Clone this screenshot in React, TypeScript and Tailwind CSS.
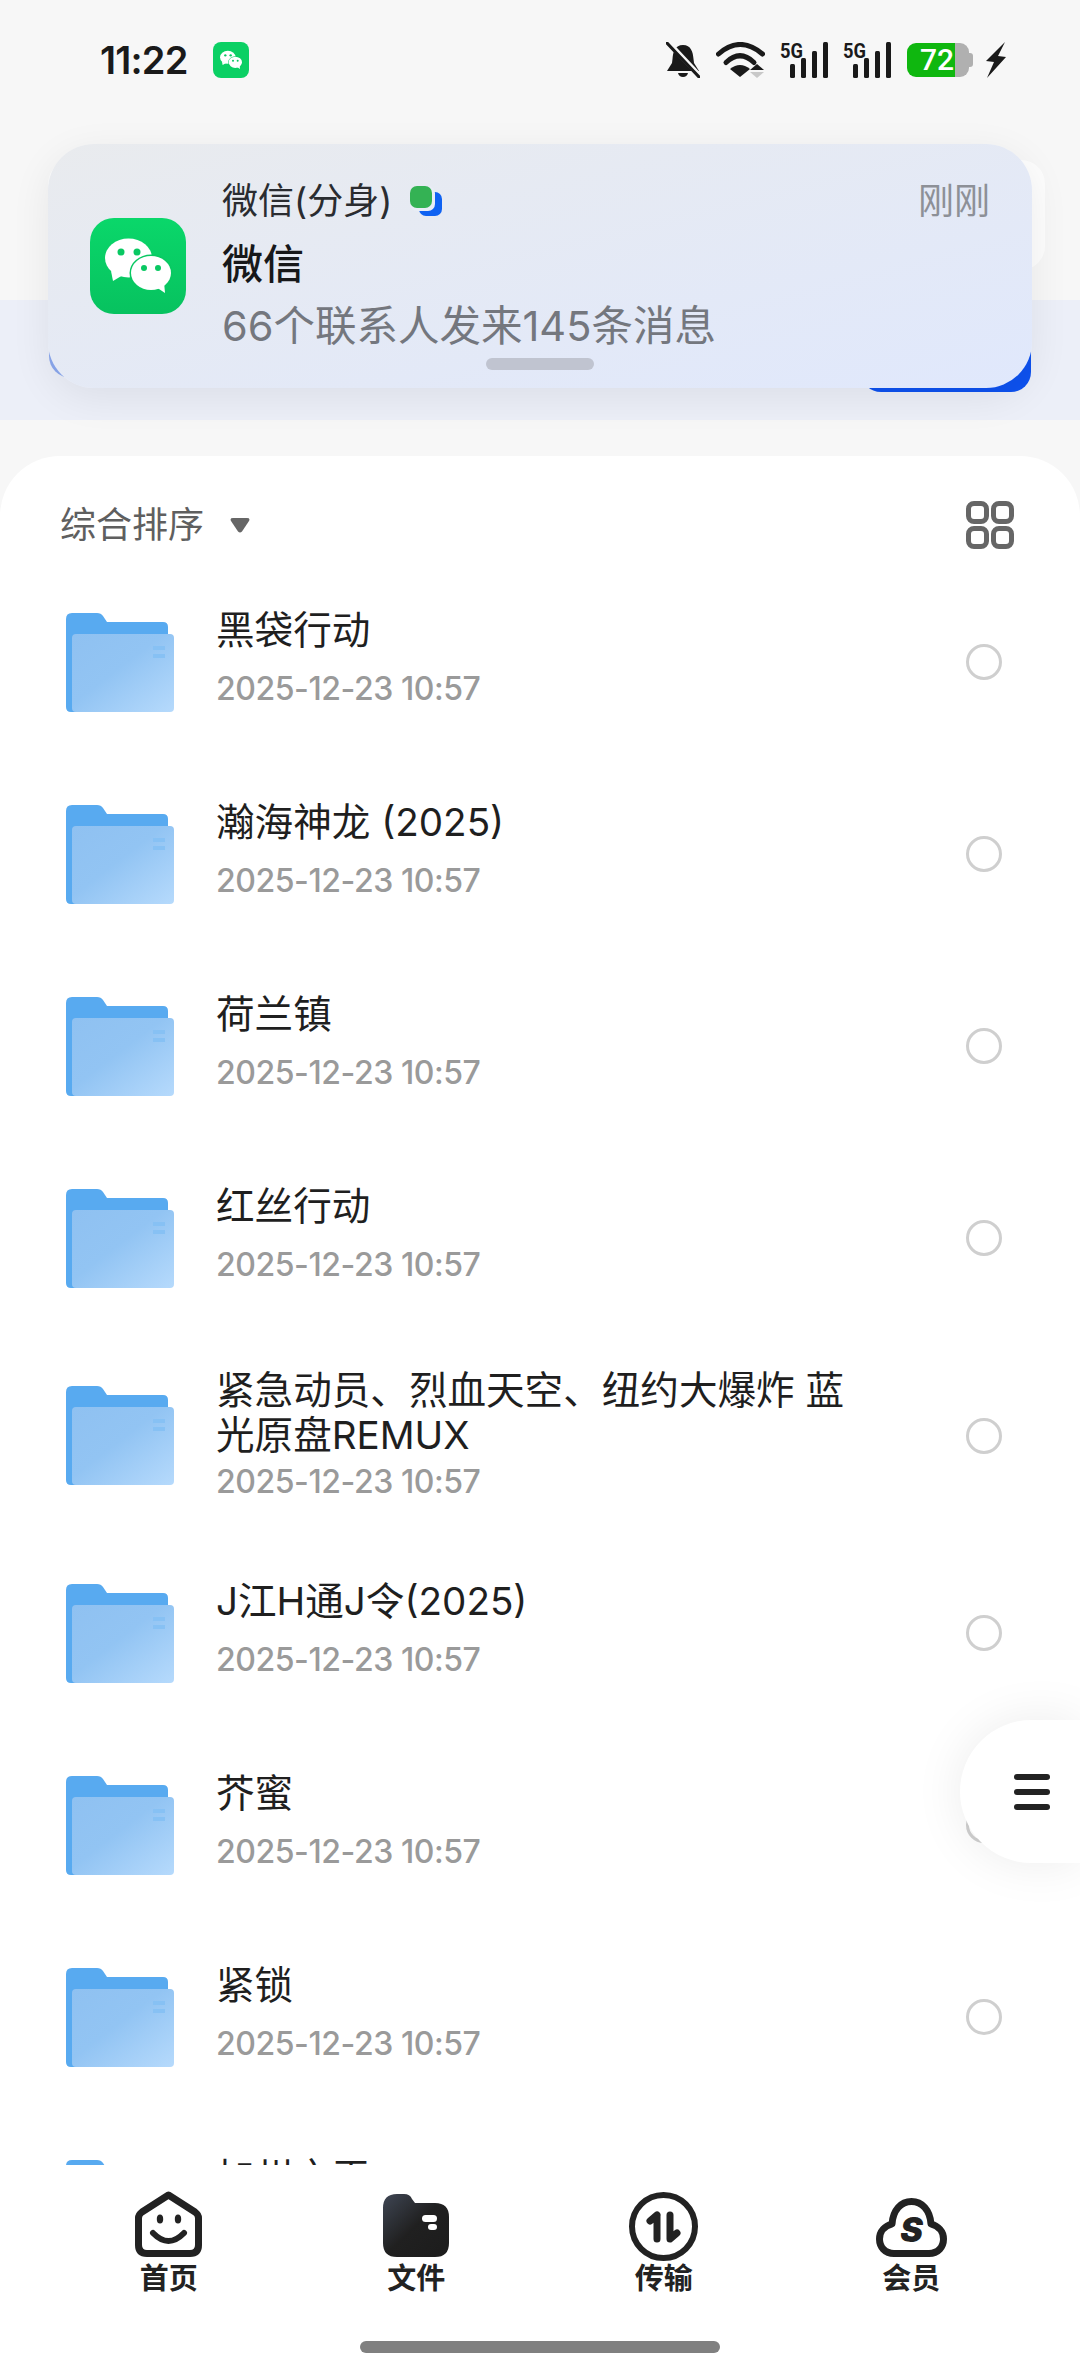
import * as React from "react";

type FileRow = {
  name: string;
  time: string;
  tall?: boolean;
};

const files: FileRow[] = [
  { name: "黑袋行动", time: "2025-12-23 10:57" },
  { name: "瀚海神龙 (2025)", time: "2025-12-23 10:57" },
  { name: "荷兰镇", time: "2025-12-23 10:57" },
  { name: "红丝行动", time: "2025-12-23 10:57" },
  { name: "紧急动员、烈血天空、纽约大爆炸 蓝光原盘REMUX", time: "2025-12-23 10:57", tall: true },
  { name: "J江H通J令(2025)", time: "2025-12-23 10:57" },
  { name: "芥蜜", time: "2025-12-23 10:57" },
  { name: "紧锁", time: "2025-12-23 10:57" },
  { name: "加州之王", time: "2025-12-23 10:57" },
];

function WeChatMark({ className }: { className: string }) {
  return (
    <svg viewBox="0 0 96 96" className={className}>
      <ellipse cx="38.5" cy="40" rx="23.5" ry="19.5" fill="#fff" />
      <path d="M21 53 L23 63 L33 57 Z" fill="#fff" />
      <circle cx="31" cy="34" r="3.5" fill="#09c862" />
      <circle cx="47" cy="34" r="3.5" fill="#09c862" />
      <ellipse cx="61" cy="55" rx="21.5" ry="18.5" fill="#09c862" />
      <ellipse cx="61" cy="55" rx="20" ry="17" fill="#fff" />
      <path d="M66 69 L75 75 L74 64 Z" fill="#fff" />
      <circle cx="54" cy="50" r="3" fill="#09c862" />
      <circle cx="68" cy="50" r="3" fill="#09c862" />
    </svg>
  );
}

function SignalIcon() {
  return (
    <svg viewBox="0 0 49 36" className="h-[36px] w-[49px] overflow-visible">
      <text
        x="0"
        y="16"
        fontSize="21"
        fontWeight="700"
        fontFamily="Roboto, sans-serif"
        fill="#1a1a1a"
        textLength="23"
        lengthAdjust="spacingAndGlyphs"
      >
        5G
      </text>
      <rect x="10" y="22" width="5" height="14" rx="1.5" fill="#1a1a1a" />
      <rect x="21" y="16" width="5" height="20" rx="1.5" fill="#1a1a1a" />
      <rect x="32" y="9" width="5" height="27" rx="1.5" fill="#1a1a1a" />
      <rect x="43" y="0" width="5" height="36" rx="1.5" fill="#1a1a1a" />
    </svg>
  );
}

function StatusBar() {
  return (
    <div className="flex h-[120px] shrink-0 items-center pl-[100px] pr-[74px]">
      <span className="w-[87px] whitespace-nowrap text-[38px] font-semibold tracking-[-0.8px] text-[#1a1a1a]">11:22</span>
      <div className="ml-[26px] flex h-[36px] w-[36px] items-center justify-center rounded-[8px] bg-[#0bd064]">
        <WeChatMark className="h-[32px] w-[32px]" />
      </div>
      <div className="ml-auto flex items-center">
        <svg viewBox="0 0 34 36" className="h-[36px] w-[34px]">
          <path d="M17 3 C9 3 7 10 6.5 17 L6 21 L1 29 H33 L28 21 L27.5 17 C27 10 25 3 17 3 Z" fill="#1a1a1a" />
          <path d="M12 31 H22 Q21 35 17 35 Q13 35 12 31 Z" fill="#1a1a1a" />
          <path d="M3 1 L33 33" stroke="#f7f7f7" strokeWidth="5" />
          <path d="M1 1 L33 35" stroke="#1a1a1a" strokeWidth="3" strokeLinecap="round" />
        </svg>
        <svg viewBox="0 0 49 36" className="ml-[16px] h-[36px] w-[49px]">
          <path d="M2.5 12 Q24 -7 46.5 12" fill="none" stroke="#1a1a1a" strokeWidth="5" strokeLinecap="round" />
          <path d="M10 20.5 Q24 7 38 20.5" fill="none" stroke="#1a1a1a" strokeWidth="5" strokeLinecap="round" />
          <path d="M24 35 L14 27 Q24 19 34 27 Z" fill="#1a1a1a" />
          <path d="M41 22 L48 28 H34 Z" fill="#1a1a1a" />
          <path d="M34 30 H48 L41 36 Z" fill="#c8c8c8" />
        </svg>
        <div className="ml-[15px]">
          <SignalIcon />
        </div>
        <div className="ml-[14px]">
          <SignalIcon />
        </div>
        <div className="ml-[15px] flex h-[34px] items-center">
          <div className="flex h-[34px] w-[62px] overflow-hidden rounded-[9px]">
            <div className="flex w-[48px] items-center justify-end bg-[#0fb70f] pr-[1px] font-['Roboto',sans-serif] text-[30px] font-medium leading-none text-white">
              72
            </div>
            <div className="flex-1 bg-[#b0b0b0]" />
          </div>
          <div className="h-[14px] w-[4px] rounded-r-[3px] bg-[#b0b0b0]" />
        </div>
        <svg viewBox="0 0 21 36" className="ml-[12px] h-[36px] w-[21px]">
          <path d="M20 0 L1 19 L9 20 L2 36 L21 15 L13 14 Z" fill="#1a1a1a" />
        </svg>
      </div>
    </div>
  );
}

// 배너 뒤에 깔린 검색/버튼 영역
function BehindBanner() {
  return (
    <>
      <div className="ml-[48px] mr-[35px] mt-[40px] h-[110px] shrink-0 rounded-[24px] bg-[#fdfdfd]" />
      <div className="mt-[30px] flex h-[120px] shrink-0 items-start justify-between bg-[#eceff8] px-[49px] pt-[10px]">
        <div className="h-[68px] w-[140px] rounded-[22px] bg-[#8ba8ee]" />
        <div className="h-[82px] w-[170px] rounded-[20px] bg-[#0e52f0]" />
      </div>
    </>
  );
}

function NotificationBanner() {
  return (
    <div className="absolute left-[48px] top-[144px] h-[244px] w-[984px] rounded-[46px] bg-linear-to-br from-[#e9ebee] to-[#e0e8fc] shadow-[0_10px_40px_rgba(0,0,0,0.07)]">
      <div className="flex h-full pl-[42px] pr-[42px]">
        <div className="mt-[74px] flex h-[96px] w-[96px] shrink-0 items-center justify-center rounded-[24px] bg-linear-to-b from-[#0ad76a] to-[#07c25f]">
          <WeChatMark className="h-[96px] w-[96px]" />
        </div>
        <div className="ml-[36px] flex-1 pt-[34px]">
          <div className="flex h-[46px] items-center">
            <span className="text-[36px] leading-[46px] text-[#2a2c30]">微信(分身)</span>
            <svg viewBox="0 0 33 30" className="ml-[18px] h-[30px] w-[33px]">
              <rect x="9" y="6" width="23" height="24" rx="7" fill="#0f62f2" />
              <rect x="0" y="0" width="25" height="25" rx="7" fill="#e9edf6" />
              <rect x="0" y="0" width="22" height="22" rx="7" fill="#34b254" />
            </svg>
            <span className="ml-auto text-[36px] leading-[46px] text-[#8d9097]">刚刚</span>
          </div>
          <div className="mt-[14px] text-[41px] font-medium leading-[52px] text-[#17181a]">微信</div>
          <div className="mt-[11px] whitespace-nowrap text-[41.5px] leading-[50px] text-[#74777e]">66个联系人发来145条消息</div>
        </div>
      </div>
      <div className="absolute left-[438px] top-[214px] h-[12px] w-[108px] rounded-full bg-[#c0c4d0]" />
    </div>
  );
}

function FolderIcon() {
  return (
    <svg viewBox="0 0 108 99" className="h-[99px] w-[108px] shrink-0">
      <defs>
        <linearGradient id="folderFront" x1="0" y1="0" x2="1" y2="1">
          <stop offset="0" stopColor="#8fc1f1" />
          <stop offset="0.45" stopColor="#92c4f3" />
          <stop offset="1" stopColor="#b6dafc" />
        </linearGradient>
      </defs>
      <path d="M0 6 Q0 0 6 0 H31 Q35 0 37 3 L41 9 H97 Q102 9 102 14 V99 H5 Q0 99 0 94 Z" fill="#58aaf0" />
      <rect x="6" y="21" width="102" height="78" rx="4" fill="url(#folderFront)" />
      <rect x="87" y="33" width="12" height="4" fill="#87c1f4" />
      <rect x="87" y="41" width="12" height="4" fill="#87c1f4" />
    </svg>
  );
}

function FileItem({ row }: { row: FileRow }) {
  return (
    <div className={`flex shrink-0 items-center pl-[66px] pr-[78px] ${row.tall ? "py-[33px]" : "py-[34px]"}`}>
      <FolderIcon />
      <div className={`ml-[42px] flex w-[640px] flex-col ${row.tall ? "pt-[1px]" : "min-h-[124px] justify-center gap-[13px] pb-[5px]"}`}>
        <div className="text-[38.6px] leading-[45px] text-[#1f1f1f]">{row.name}</div>
        <div className={`text-[32px] font-medium leading-[45px] tracking-[-0.45px] text-[#9a9a9a] ${row.tall ? "mt-[1px]" : ""}`}>{row.time}</div>
      </div>
      <div className="ml-auto h-[36px] w-[36px] shrink-0 rounded-full border-[3px] border-[#cfcfcf]" />
    </div>
  );
}

function HomeIcon() {
  return (
    <svg viewBox="0 0 67 66" className="h-[66px] w-[67px]">
      <path
        d="M33.5 4 L60 21 Q63.5 23.5 63.5 27 V54 Q63.5 62.5 55 62.5 H12 Q3.5 62.5 3.5 54 V27 Q3.5 23.5 7 21 Z"
        fill="none"
        stroke="#222"
        strokeWidth="7"
        strokeLinejoin="round"
      />
      <ellipse cx="25" cy="28" rx="3.2" ry="4.5" fill="#222" />
      <ellipse cx="43" cy="28" rx="3.2" ry="4.5" fill="#222" />
      <path d="M18 42 Q33.5 58 49 42" fill="none" stroke="#222" strokeWidth="6" strokeLinecap="round" />
    </svg>
  );
}

function FilesIcon() {
  return (
    <svg viewBox="0 0 66 63" className="mt-[3px] h-[63px] w-[66px]">
      <defs>
        <linearGradient id="darkFolder" x1="0" y1="0" x2="1" y2="1">
          <stop offset="0" stopColor="#3f4654" />
          <stop offset="0.5" stopColor="#202020" />
          <stop offset="1" stopColor="#1c1c1c" />
        </linearGradient>
      </defs>
      <path
        d="M0 14 Q0 0 14 0 H21 Q27 0 29 5 L32 9 H52 Q66 9 66 23 V49 Q66 63 52 63 H14 Q0 63 0 49 Z"
        fill="url(#darkFolder)"
      />
      <rect x="39" y="21" width="15" height="7" rx="3.5" fill="#fff" />
      <rect x="45" y="30" width="9" height="6" rx="3" fill="#fff" />
    </svg>
  );
}

function TransferIcon() {
  return (
    <svg viewBox="0 0 69 69" className="mt-[1px] h-[69px] w-[69px]">
      <circle cx="34.5" cy="34.5" r="31.5" fill="none" stroke="#222" strokeWidth="6" />
      <path d="M28 23 V47 M28 23 L21 29" fill="none" stroke="#222" strokeWidth="7" strokeLinecap="round" strokeLinejoin="round" />
      <path d="M41 23 V47 L48 41" fill="none" stroke="#222" strokeWidth="7" strokeLinecap="round" strokeLinejoin="round" />
    </svg>
  );
}

function VipIcon() {
  return (
    <svg viewBox="0 0 71 59" className="mt-[7px] h-[59px] w-[71px]">
      <path
        d="M18 55.5 H53 C62 55.5 67.5 49 67.5 41 C67.5 33 62 28 55 26 C54 12 46 3.5 35.5 3.5 C25 3.5 17 12 16 26 C9 28 3.5 33 3.5 41 C3.5 49 9 55.5 18 55.5 Z"
        fill="none"
        stroke="#222"
        strokeWidth="7"
        strokeLinejoin="round"
      />
      <text x="35.5" y="44" textAnchor="middle" fontSize="34" fontWeight="900" fontStyle="italic" fontFamily="Inter, sans-serif" fill="#222">
        S
      </text>
    </svg>
  );
}

const tabs = [
  { label: "首页", icon: <HomeIcon /> },
  { label: "文件", icon: <FilesIcon /> },
  { label: "传输", icon: <TransferIcon /> },
  { label: "会员", icon: <VipIcon /> },
];

function BottomNav() {
  return (
    <div className="shrink-0 bg-white pt-[26px]">
      <div className="grid grid-cols-4 px-[45px]">
        {tabs.map((tab) => (
          <div key={tab.label} className="flex flex-col items-center">
            <div className="flex h-[70px] items-start">{tab.icon}</div>
            <div className="h-[36px] text-[29px] font-semibold leading-[36px] text-[#222]">{tab.label}</div>
          </div>
        ))}
      </div>
      <div className="mx-auto mt-[44px] h-[12px] w-[360px] rounded-full bg-[#808080]" />
      <div className="h-[21px]" />
    </div>
  );
}

export default function App() {
  return (
    <div className="relative flex h-[2374px] w-[1080px] flex-col overflow-hidden bg-[#f7f7f7] font-['Inter','Noto_Sans_CJK_SC',sans-serif]">
      <StatusBar />
      <BehindBanner />

      <div className="mt-[36px] flex min-h-0 flex-1 flex-col overflow-hidden rounded-t-[60px] bg-white">
        <div className="flex shrink-0 items-center justify-between pl-[60px] pr-[66px] pt-[45px] pb-[17px]">
          <div className="flex h-[48px] items-center">
            <span className="text-[36px] leading-[48px] text-[#5f5f5f]">综合排序</span>
            <svg viewBox="0 0 20 15" className="ml-[26px] h-[15px] w-[20px]">
              <path d="M3 0 H17 Q20.5 0 19 3 L12 13.5 Q10 15.5 8 13.5 L1 3 Q-0.5 0 3 0 Z" fill="#666" />
            </svg>
          </div>
          <div className="grid grid-cols-2 gap-[2px]">
            <div className="h-[23px] w-[23px] rounded-[8px] border-[5px] border-[#666]" />
            <div className="h-[23px] w-[23px] rounded-[8px] border-[5px] border-[#666]" />
            <div className="h-[23px] w-[23px] rounded-[8px] border-[5px] border-[#666]" />
            <div className="h-[23px] w-[23px] rounded-[8px] border-[5px] border-[#666]" />
          </div>
        </div>

        <div className="flex min-h-0 flex-1 flex-col overflow-hidden">
          {files.map((row) => (
            <FileItem key={row.name} row={row} />
          ))}
        </div>

        <BottomNav />
      </div>

      <NotificationBanner />

      {/* 우측 플로팅 메뉴 버튼 */}
      <div className="absolute right-0 top-[1720px] flex h-[143px] w-[120px] items-center rounded-l-[72px] bg-white pl-[54px] shadow-[0_0_50px_rgba(0,0,0,0.08)]">
        <div className="flex flex-col gap-[9px]">
          <div className="h-[6px] w-[36px] rounded-full bg-[#222]" />
          <div className="h-[6px] w-[36px] rounded-full bg-[#222]" />
          <div className="h-[6px] w-[36px] rounded-full bg-[#222]" />
        </div>
      </div>
    </div>
  );
}
